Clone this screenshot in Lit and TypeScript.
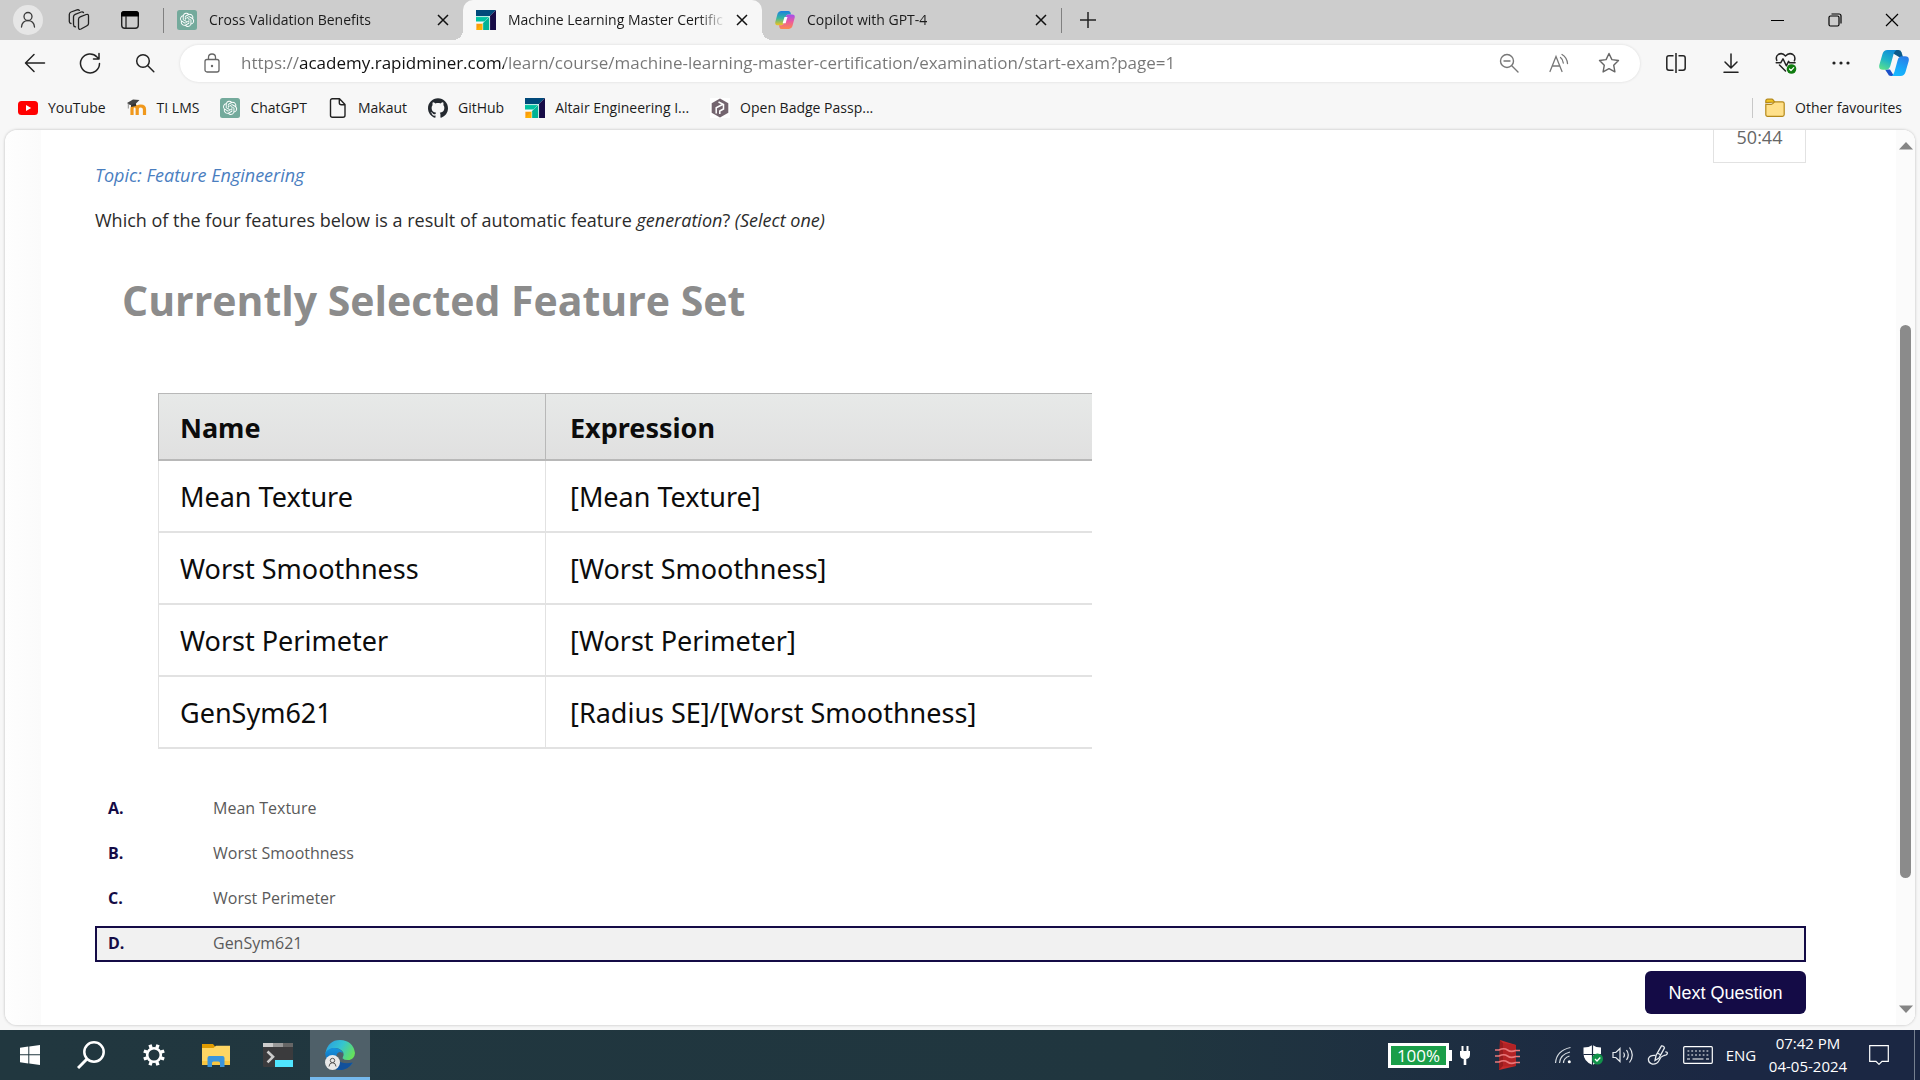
import { LitElement, html, css, TemplateResult } from "lit";
import { customElement, property, state } from "lit/decorators.js";
import { classMap } from "lit/directives/class-map.js";

const icons: Record<string, TemplateResult> = {
  profile: html`<svg width="30" height="30" viewBox="0 0 30 30"><circle cx="15" cy="15" r="15" fill="#e6e6e6"/><g fill="none" stroke="#3a3a3a" stroke-width="1.3" stroke-linecap="round"><circle cx="15" cy="11.5" r="4"/><path d="M8.5 22c.4-4 3-6.3 6.5-6.3s6.100 2.300 6.500 6.300"/></g></svg>`,
  workspaces: html`<svg width="22" height="22" viewBox="0 0 22 22" fill="none" stroke="#222" stroke-width="1.3" stroke-linejoin="round" stroke-linecap="round"><path d="M10.500 10.300q0-1.800 1.700-2.500l6-2.300q2.300-.7 2.300 1.500v7.500q0 1.500-1.500 2.200l-6 3.300q-2.500 1-2.500-1.500z"/><path d="M7.500 17.800q-2-.3-2-2.300V7.800q0-1.800 1.700-2.500l6-2.300q1.500-.5 2.300.5"/><path d="M3 14.500q-1.700-.3-1.700-2V5.500q0-1.800 1.700-2.500l6-2.100q1.500-.5 2.300.5"/></svg>`,
  tabActions: html`<svg width="20" height="20" viewBox="0 0 20 20"><rect x="1.700" y="1.700" width="16.600" height="16.600" rx="3" fill="none" stroke="#222" stroke-width="1.400"/><path d="M1 6.500V4q0-3 3-3h12q3 0 3 3v2.500z" fill="#000"/><path d="M6 6v12" stroke="#222" stroke-width="1.300"/></svg>`,
  chatgpt: html`<svg width="20" height="20" viewBox="0 0 40 40"><rect width="40" height="40" rx="5" fill="#74aa9c"/><path transform="translate(6 5.500) scale(1.180)" fill="#fff" d="M22.2819 9.8211a5.9847 5.9847 0 0 0-.5157-4.9108 6.0462 6.0462 0 0 0-6.5098-2.9A6.0651 6.0651 0 0 0 4.9807 4.1818a5.9847 5.9847 0 0 0-3.9977 2.9 6.0462 6.0462 0 0 0 .7427 7.0966 5.98 5.98 0 0 0 .511 4.9107 6.051 6.051 0 0 0 6.5146 2.9001A5.9847 5.9847 0 0 0 13.2599 24a6.0557 6.0557 0 0 0 5.7718-4.2058 5.9894 5.9894 0 0 0 3.9977-2.9001 6.0557 6.0557 0 0 0-.7475-7.0729zm-9.022 12.6081a4.4755 4.4755 0 0 1-2.8764-1.0408l.1419-.0804 4.7783-2.7582a.7948.7948 0 0 0 .3927-.6813v-6.7369l2.02 1.1686a.071.071 0 0 1 .038.052v5.5826a4.504 4.504 0 0 1-4.4945 4.4944zm-9.6607-4.1254a4.4708 4.4708 0 0 1-.5346-3.0137l.142.0852 4.783 2.7582a.7712.7712 0 0 0 .7806 0l5.8428-3.3685v2.3324a.0804.0804 0 0 1-.0332.0615L9.74 19.9502a4.4992 4.4992 0 0 1-6.1408-1.6464zM2.3408 7.8956a4.485 4.485 0 0 1 2.3655-1.9728V11.6a.7664.7664 0 0 0 .3879.6765l5.8144 3.3543-2.0201 1.1685a.0757.0757 0 0 1-.071 0l-4.8303-2.7865A4.504 4.504 0 0 1 2.3408 7.872zm16.5963 3.8558L13.1038 8.364 15.1192 7.2a.0757.0757 0 0 1 .071 0l4.8303 2.7913a4.4944 4.4944 0 0 1-.6765 8.1042v-5.6772a.79.79 0 0 0-.407-.667zm2.0107-3.0231l-.142-.0852-4.7735-2.7818a.7759.7759 0 0 0-.7854 0L9.409 9.2297V6.8974a.0662.0662 0 0 1 .0284-.0615l4.8303-2.7866a4.4992 4.4992 0 0 1 6.6802 4.66zM8.3065 12.863l-2.02-1.1638a.0804.0804 0 0 1-.038-.0567V6.0742a4.4992 4.4992 0 0 1 7.3757-3.4537l-.142.0805L8.704 5.459a.7948.7948 0 0 0-.3927.6813zm1.0976-2.3654l2.602-1.4998 2.6069 1.4998v2.9994l-2.5974 1.4997-2.6067-1.4997Z"/></svg>`,
  altair: html`<svg width="20" height="20" viewBox="0 0 20 20"><path d="M0 0h20l-6 6H0z" fill="#00497a"/><path d="M20 0v20h-6V6z" fill="#160b46"/><path d="M0 6.600h13.200L8.500 11.500H0z" fill="#00c2a2"/><path d="M13.400 6.800V20H6.600v-6.500z" fill="#00b295"/><path d="M0 7v-.4h13.600V20" fill="none" stroke="#d9f3ee" stroke-width=".7"/><path d="M0 13.300h6.700V20H0z" fill="#fa9c0e" stroke="#fff" stroke-width=".7"/><path d="M0 20h6.400v-6.400z" fill="#ffb000"/></svg>`,
  copilotTab: html`<svg width="20" height="20" viewBox="0 0 20 20"><defs><linearGradient id="ca" x1="0" y1="0" x2="0" y2="1"><stop offset="0" stop-color="#1a7fe0"/><stop offset=".5" stop-color="#35b7a0"/><stop offset="1" stop-color="#f3c21b"/></linearGradient><linearGradient id="cb" x1="0" y1="0" x2="0" y2="1"><stop offset="0" stop-color="#a04df0"/><stop offset=".5" stop-color="#ec5a9c"/><stop offset="1" stop-color="#fb8a4c"/></linearGradient></defs><path d="M6 1h7.500q1.500 0 2 1.500L16 4.500h-3q-1.500 0-2 1.500L8.700 13.500q-.6 1.700-2.300 1.700H3Q-.3 15.200.3 12L2.600 3.600Q3.500 1 6 1z" fill="url(#ca)"/><path d="M14 19H6.500q-1.500 0-2-1.500L4 15.200h2.500q1.700 0 2.300-1.700L11 6q.5-1.600 2.300-1.600H17q3.300 0 2.700 3.200l-2.300 8.600Q16.500 19 14 19z" fill="url(#cb)"/><path d="M9.500 7h3L10.600 13.300h-3z" fill="#fff"/></svg>`,
  close: html`<svg width="12" height="12" viewBox="0 0 12 12" stroke="#111" stroke-width="1.500"><path d="m1 1 10 10M11 1 1 11"/></svg>`,
  plus: html`<svg width="18" height="18" viewBox="0 0 18 18" stroke="#222" stroke-width="1.500"><path d="M9 1v16M1 9h16"/></svg>`,
  minimize: html`<svg width="13" height="13" viewBox="0 0 13 13"><path d="M0 6.500h13" stroke="#000"/></svg>`,
  restore: html`<svg width="14" height="14" viewBox="0 0 14 14" fill="none" stroke="#000" stroke-width="1.200"><rect x="1" y="3" width="10" height="10" rx="1.500"/><path d="M3.500 1H11q2 0 2 2v7.500"/></svg>`,
  winClose: html`<svg width="14" height="14" viewBox="0 0 14 14" stroke="#000" stroke-width="1.200"><path d="m1 1 12 12M13 1 1 13"/></svg>`,
  back: html`<svg width="22" height="20" viewBox="0 0 22 20" fill="none" stroke="#222" stroke-width="1.500" stroke-linecap="round" stroke-linejoin="round"><path d="M20.500 10H2M10 1.500 1.500 10 10 18.500"/></svg>`,
  reload: html`<svg width="22" height="22" viewBox="0 0 22 22" fill="none" stroke="#222" stroke-width="1.500" stroke-linecap="round" stroke-linejoin="round"><path d="M20.500 11.500A9.500 9.500 0 1 1 18 5l1.500 1.500M20 1.500v5.500h-5.500"/></svg>`,
  search: html`<svg width="20" height="20" viewBox="0 0 20 20" fill="none" stroke="#222" stroke-width="1.500" stroke-linecap="round"><circle cx="8" cy="8" r="6.300"/><path d="m12.800 12.800 6 6"/></svg>`,
  lock: html`<svg width="18" height="20" viewBox="0 0 18 20" fill="none" stroke="#666" stroke-width="1.300"><rect x="2" y="6.500" width="14" height="12.500" rx="2"/><path d="M5.500 6.500V4.300Q5.500 1 9 1t3.500 3.300v2.200"/><circle cx="9" cy="13" r="1.200" fill="#666" stroke="none"/></svg>`,
  zoomOut: html`<svg width="20" height="20" viewBox="0 0 20 20" fill="none" stroke="#777" stroke-width="1.400" stroke-linecap="round"><circle cx="8" cy="8" r="6.500"/><path d="m13 13 6 6M5 8h6"/></svg>`,
  readAloud: html`<svg width="20" height="20" viewBox="0 0 20 20" fill="none" stroke="#777" stroke-width="1.300" stroke-linecap="round"><path d="m1 18.500 6-15 6 15M3.200 13h7.600M11.500 4.500q2.500 1.800 2.800 5.500M13 1.500q5 3 5.500 9"/></svg>`,
  star: html`<svg width="22" height="22" viewBox="0 0 22 22" fill="none" stroke="#666" stroke-width="1.400" stroke-linejoin="round"><path d="m11 1.500 2.900 6.100 6.600.9-4.800 4.700 1.200 6.700L11 16.700l-5.900 3.200 1.200-6.700L1.500 8.500l6.600-.9z"/></svg>`,
  split: html`<svg width="22" height="20" viewBox="0 0 22 20" fill="none" stroke="#222" stroke-width="1.500"><path d="M11 0v20M8.500 2.700H4q-2.200 0-2.200 2.200v10.200q0 2.200 2.200 2.200h4.500M13.500 2.700H18q2.200 0 2.200 2.200v10.200q0 2.200-2.200 2.200h-4.500"/></svg>`,
  download: html`<svg width="16" height="20" viewBox="0 0 16 20" fill="none" stroke="#222" stroke-width="1.500" stroke-linecap="round" stroke-linejoin="round"><path d="M8 1v13.500M2 9l6 6 6-6M1 19.200h14"/></svg>`,
  essentials: html`<svg width="22" height="22" viewBox="0 0 22 22" fill="none" stroke="#222" stroke-width="1.500" stroke-linecap="round" stroke-linejoin="round"><path d="M1.800 8.500Q.3 4.500 3.300 2.500 7.300.2 10.500 4q3.500-3.800 7.400-1.500 3 2 1.500 6.300M4.500 13l6 6M1.200 10.800h4.500l2.300-4 3.300 7 2.300-4.500 1 1.500h5.500"/><circle cx="16.500" cy="17" r="4.800" fill="#107c10" stroke="none"/><path d="m14.500 17 1.500 1.500 2.700-2.800" stroke="#fff" stroke-width="1.200"/></svg>`,
  dots: html`<svg width="18" height="4" viewBox="0 0 18 4" fill="#222"><circle cx="2" cy="2" r="1.600"/><circle cx="9" cy="2" r="1.600"/><circle cx="16" cy="2" r="1.600"/></svg>`,
  copilot: html`<svg width="30" height="28" viewBox="0 0 30 28"><defs><linearGradient id="cc" x1=".6" y1="0" x2=".2" y2="1"><stop offset="0" stop-color="#0f8ed8"/><stop offset=".5" stop-color="#1fb5c8"/><stop offset="1" stop-color="#5be08a"/></linearGradient><linearGradient id="cd" x1=".7" y1="0" x2=".3" y2="1"><stop offset="0" stop-color="#2a7de8"/><stop offset=".6" stop-color="#18a8f8"/><stop offset="1" stop-color="#18b8ff"/></linearGradient></defs><path d="M8.500 1h11q2.300 0 3 2.200L24 8h-4z" fill="#0b5a8a"/><path d="M6 20.500h5l4 6.500h-3q-2.500 0-3.300-2.500z" fill="#1b50c8"/><path d="M8.500 1h9Q15.500 2 14.600 5l-3.300 12q-1 3.700-4.500 3.700H4Q-.6 20.700.3 16L3.500 5Q4.700 1 8.500 1z" fill="url(#cc)"/><path d="M21.500 27h-9q2-1 2.900-4l3.300-12q1-3.700 4.500-3.700H26q4.600 0 3.700 4.700L26.500 23q-1.200 4-5 4z" fill="url(#cd)"/></svg>`,
  youtube: html`<svg width="20" height="20" viewBox="0 0 20 20"><rect y="3" width="20" height="14" rx="3.500" fill="#f00"/><path d="m8 7 5.200 3L8 13z" fill="#fff"/></svg>`,
  moodle: html`<svg width="20" height="20" viewBox="0 0 20 20"><path d="M5 17V11q0-3 2.600-3t2.600 3V17m0-6q0-3 3.500-3 3.800 0 3.800 3.500V17" fill="none" stroke="#f0981c" stroke-width="3.200"/><path d="M0 5 6 1.500 12.500 2 8 6.500 3 7z" fill="#444"/><path d="M1.300 5.500v5" stroke="#777" stroke-width=".8"/><path d="M4 6.500 9 5.200V8L4 9z" fill="#333"/></svg>`,
  file: html`<svg width="20" height="20" viewBox="0 0 20 20" fill="none" stroke="#222" stroke-width="1.400" stroke-linejoin="round"><path d="M4 .8h7.500L17 6.500v10.700q0 2-2 2H4.500q-2 0-2-2V2.800q0-2 2-2zM11.300 1v3.800q0 2 2 2H17"/></svg>`,
  github: html`<svg width="20" height="20" viewBox="0 0 24 24" fill="#24292f"><path d="M12 .297c-6.63 0-12 5.373-12 12 0 5.303 3.438 9.8 8.205 11.385.6.113.82-.258.82-.577 0-.285-.01-1.04-.015-2.04-3.338.724-4.042-1.61-4.042-1.61C4.422 18.07 3.633 17.7 3.633 17.7c-1.087-.744.084-.729.084-.729 1.205.084 1.838 1.236 1.838 1.236 1.07 1.835 2.809 1.305 3.495.998.108-.776.417-1.305.76-1.605-2.665-.3-5.466-1.332-5.466-5.93 0-1.31.465-2.38 1.235-3.22-.135-.303-.54-1.523.105-3.176 0 0 1.005-.322 3.3 1.23.96-.267 1.98-.399 3-.405 1.02.006 2.04.138 3 .405 2.28-1.552 3.285-1.23 3.285-1.23.645 1.653.24 2.873.12 3.176.765.84 1.23 1.91 1.23 3.22 0 4.61-2.805 5.625-5.475 5.92.42.36.81 1.096.81 2.22 0 1.606-.015 2.896-.015 3.286 0 .315.21.69.825.57C20.565 22.092 24 17.592 24 12.297c0-6.627-5.373-12-12-12"/></svg>`,
  badge: html`<svg width="20" height="20" viewBox="0 0 20 20"><rect width="20" height="20" fill="#fff"/><path d="m10 .5 8.300 4.700v9.600L10 19.500l-8.300-4.700V5.200z" fill="#74656f"/><path d="M6.200 15.500V9.800L12.500 6.500M8.500 4l5 2.500v4.500L9.800 13v3" fill="none" stroke="#fff" stroke-width="1.500"/></svg>`,
  folder: html`<svg width="20" height="20" viewBox="0 0 20 20" stroke="#b5891a" stroke-width="1.200"><path d="M.8 4.500V3q0-1.800 1.800-1.800h4.200q.8 0 1.300.6L9.700 4z" fill="#f2c520"/><path d="M.8 6.300h5.500q.8 0 1.400-.6L9 4.300q.5-.5 1.200-.5h7.200q1.800 0 1.800 1.800v11q0 1.800-1.800 1.800H2.600Q.8 18.400.8 16.600z" fill="#ffe08a"/></svg>`,
  windows: html`<svg width="20" height="20" viewBox="0 0 20 20" fill="#fff"><path d="M0 2.800 8.300 1.600v7.700H0zM9.300 1.500 20 0v9.300H9.300zM0 10.300h8.300V18.400L0 17.200zM9.300 10.300H20V20L9.300 18.500z"/></svg>`,
  taskSearch: html`<svg width="30" height="28" viewBox="0 0 30 28" fill="none" stroke="#fff"><circle cx="17" cy="11" r="9.700" stroke-width="2.500"/><path d="M10 18 1 27" stroke-width="3"/></svg>`,
  gear: html`<svg width="24" height="24" viewBox="0 0 24 24" fill="none" stroke="#fff"><circle cx="12" cy="12" r="6.800" stroke-width="2.600"/><path stroke-width="3.400" d="M9.200 5.200 8 1.800M14.800 5.200 16 1.800M18.800 9.200 22.200 8M18.800 14.800 22.200 16M14.800 18.800 16 22.200M9.200 18.800 8 22.200M5.200 14.800 1.800 16M5.200 9.200 1.800 8"/></svg>`,
  explorer: html`<svg width="28" height="24" viewBox="0 0 28 24"><path d="M0 1h11l2.500 3H28v4H0z" fill="#e09b00"/><path d="M0 5h11.500L14 2.700h14V22H0z" fill="#ffd663"/><path d="M0 18h28v4H0z" fill="#f9c640"/><path d="M5.500 24V15q0-2 2-2h13q2 0 2 2v9H18v-4q0-1.500-1.500-1.500h-5Q10 18.500 10 20v4z" fill="#3b95dc"/></svg>`,
  terminal: html`<svg width="30" height="24" viewBox="0 0 30 24"><rect width="30" height="24" rx="1" fill="#3b3b3d"/><path d="M0 0h10v4H0z" fill="#ccc"/><path d="M10 0h10v4H10z" fill="#999"/><path d="M20 0h10v4H20z" fill="#666"/><path d="m4.500 8.500 5.500 5.300-5.500 5.500" fill="none" stroke="#ccc" stroke-width="2.600"/><rect x="12" y="17" width="18" height="7" fill="#50e6ff"/></svg>`,
  edge: html`<svg width="30" height="30" viewBox="0 0 30 30"><defs><linearGradient id="ea" x1="0" y1=".2" x2="1" y2=".6"><stop offset="0" stop-color="#2a9fe0"/><stop offset=".5" stop-color="#35c4d0"/><stop offset="1" stop-color="#66e05a"/></linearGradient><linearGradient id="eb" x1="0" y1="0" x2="0" y2="1"><stop offset="0" stop-color="#1494df"/><stop offset="1" stop-color="#0b56a8"/></linearGradient></defs><path d="M.3 13.500Q3 0 15 0q13 .5 15 13-.5 5.500-5.500 7-5 .5-7-1.800 2-2.700.8-5.700Q16 8.500 10.500 8 4 8 .3 13.500z" fill="url(#ea)"/><path d="M.2 13.500Q3 7.500 10 8q6.500.7 8 5.500-3.500-3-6 .3-2 4 2.500 8 5.500 4.200 13.500 1Q23 29.500 15.500 30 2 29.500.2 13.500z" fill="url(#eb)"/><path d="M12 20q6.500 5 15.500 2.500Q23 29.500 16 30q-3.500-3-4-10z" fill="#12519c"/><circle cx="7.500" cy="22.500" r="7.500" fill="#e8e8e8"/><g fill="none" stroke="#555"><circle cx="7.500" cy="20.500" r="2.200"/><path d="M4 26.500q.3-3.800 3.500-3.800t3.500 3.800"/></g></svg>`,
  plug: html`<svg width="10" height="19" viewBox="0 0 10 19" fill="#fff"><path d="M1.500 0h2v6h-2zM6.500 0h2v6h-2zM0 5h10v3.500q0 4-3.700 4.500v6H3.700v-6Q0 12.500 0 8.500z"/></svg>`,
  redStack: html`<svg width="26" height="30" viewBox="0 0 26 30"><path d="M5 0 21 5v21L4 30z" fill="#c62b2b"/><path d="M5 0 8 3v23l-4 4z" fill="#971c1e"/><path d="m8 3 13 2v21L8 26.500z" fill="#b32325"/><g fill="none" stroke="#e8787a" stroke-width="1.600"><path d="M0 10h4q5-2.500 8.500 0t8 .5H25M0 16h4q5-2.500 8.500 0t8 .5H25M0 22h4q5-2.500 8.500 0t8 .5H25"/></g></svg>`,
  wifi: html`<svg width="18" height="18" viewBox="0 0 18 18" fill="none" stroke="#d4dae0" stroke-width="1.200"><circle cx="15.300" cy="15.700" r="1.500" fill="#fff" stroke="none"/><path d="M9.500 17q0-5 6-7M5.500 17q.5-8.500 10.500-11M1.500 17Q2.500 4.500 16.500 1.500"/></svg>`,
  shield: html`<svg width="20" height="20" viewBox="0 0 20 20"><path d="M9.500 0Q13 2.500 18 2.500v6q0 8-8.500 11.500Q.5 16.500.5 8.500v-6Q6 2.500 9.500 0z" fill="#fff"/><path d="M9.500 0v20M.5 9.500H18" stroke="#1d2b42" stroke-width="1.200"/><circle cx="14.500" cy="14" r="5.500" fill="#12924a"/><path d="m12 14 2 2 3.300-3.500" fill="none" stroke="#fff" stroke-width="1.300"/></svg>`,
  speaker: html`<svg width="22" height="18" viewBox="0 0 22 18" fill="none" stroke="#e6eaee" stroke-width="1.200"><path d="M1 6.500h2.800L8 2.500v13l-4.200-4H1zM11.500 6.500q1.800 2.500 0 5M14.500 4q3.500 5 0 10M17.500 1.500q5.500 7.500 0 15"/></svg>`,
  pen: html`<svg width="22" height="20" viewBox="0 0 22 20" fill="none" stroke="#e6eaee" stroke-width="1.300"><path d="m8 15.500 1-5L14.500.9q2.500-.4 3 2L12 13zM10.500 8l3.300 2"/><path d="M8.500 10.500Q3 10 1.500 13.500q-.5 4 3.500 5.500 5 .5 7-3.500 1.500-4 5-5 3-.2 3.300-2t-2-1.500"/></svg>`,
  keyboard: html`<svg width="30" height="18" viewBox="0 0 30 18" fill="none" stroke="#fff" stroke-width="1.200"><rect x=".7" y=".7" width="28.600" height="16.600" rx="1"/><path d="M4.500 5h21M4.500 9h21" stroke-dasharray="1.800 2"/><path d="M4 13h3M9.500 13h11M23 13h3"/></svg>`,
  notice: html`<svg width="20" height="20" viewBox="0 0 20 20" fill="none" stroke="#fff" stroke-width="1.200"><path d="M.7.700h18.600v15.600H13l-3 3-3-3H.7z"/></svg>`,
  up: html`<svg width="14" height="8" viewBox="0 0 14 8"><path d="m7 0 7 7.500H0z" fill="#858585"/></svg>`,
  down: html`<svg width="14" height="8" viewBox="0 0 14 8"><path d="m7 8 7-7.500H0z" fill="#858585"/></svg>`,
};

const shared = css`
  :host { box-sizing: border-box; font-family: "Open Sans", "Noto Sans", sans-serif; }
  *, *::before, *::after { box-sizing: border-box; }
  svg { display: block; flex: none; }
  button { border: 0; padding: 0; margin: 0; background: none; font: inherit; color: inherit; display: flex; align-items: center; justify-content: center; flex: none; }
  a { color: inherit; text-decoration: none; }
`;

@customElement("browser-tabs")
class BrowserTabs extends LitElement {
  static styles = [shared, css`
    :host { display: flex; height: 40px; background: #cdcdcd; font-size: 14px; color: #1b1b1b; }
    .tools { display: flex; align-items: center; width: 164px; padding-left: 2px; flex: none; }
    .tools button { width: 51px; height: 40px; }
    .rule { width: 1px; height: 25px; background: #808080; margin-left: auto; flex: none; }
    .tab { display: flex; align-items: center; width: 299px; min-width: 0; padding: 0 4px 0 13px; position: relative; }
    .tab.active { background: #f7f7f7; border-radius: 10px 10px 0 0; }
    .tab.active::before, .tab.active::after { content: ""; position: absolute; bottom: 0; width: 10px; height: 10px; }
    .tab.active::before { left: -10px; background: radial-gradient(circle at 0 0, #cdcdcd 10px, #f7f7f7 10px); }
    .tab.active::after { right: -10px; background: radial-gradient(circle at 100% 0, #cdcdcd 10px, #f7f7f7 10px); }
    .label { flex: 1; min-width: 0; margin-left: 12px; padding-bottom: 2px; overflow: hidden; white-space: nowrap; mask-image: linear-gradient(to right, #000 calc(100% - 28px), transparent); }
    .shut { width: 32px; height: 32px; }
    .new { width: 52px; height: 40px; }
    .end { align-self: center; margin-left: 0; }
    .window { display: flex; margin-left: auto; }
    .window button { width: 57px; height: 40px; }
  `];
  @property({ type: Array }) tabs: { icon: string; label: string; active?: boolean }[] = [];
  render() {
    return html`
      <div class="tools">
        <button aria-label="Profile">${icons.profile}</button>
        <button aria-label="Workspaces">${icons.workspaces}</button>
        <button aria-label="Tab actions menu">${icons.tabActions}</button>
        <span class="rule"></span>
      </div>
      ${this.tabs.map((t) => html`
        <div class=${classMap({ tab: true, active: !!t.active })}>
          ${icons[t.icon]}<span class="label">${t.label}</span>
          <button class="shut" aria-label="Close tab">${icons.close}</button>
        </div>`)}
      <span class="rule end"></span>
      <button class="new" aria-label="New tab">${icons.plus}</button>
      <div class="window">
        <button aria-label="Minimise">${icons.minimize}</button>
        <button aria-label="Restore">${icons.restore}</button>
        <button aria-label="Close window">${icons.winClose}</button>
      </div>`;
  }
}

@customElement("browser-toolbar")
class BrowserToolbar extends LitElement {
  static styles = [shared, css`
    :host { display: flex; align-items: center; height: 46px; gap: 8px; padding: 0 0 0 7px; background: #f7f7f7; }
    .group { display: flex; }
    .group button { width: 55px; height: 36px; }
    .group .brand { width: 52px; }
    .address { flex: 1; min-width: 0; display: flex; align-items: center; height: 37px; border-radius: 19px; background: #fff; padding: 0 6px 0 7px; box-shadow: 0 0 3px #0000001f; }
    .address button { width: 50px; height: 36px; }
    .url { flex: 1; min-width: 0; border: 0; outline: 0; padding: 0 0 0 4px; font: 17px/36px "Open Sans", sans-serif; color: transparent; background: linear-gradient(to right, #767676 62px, #111 62px 267px, #767676 267px); -webkit-background-clip: text; background-clip: text; }
  `];
  @property() url = "";
  render() {
    return html`
      <div class="group">
        <button aria-label="Back">${icons.back}</button>
        <button aria-label="Refresh">${icons.reload}</button>
        <button aria-label="Search">${icons.search}</button>
      </div>
      <div class="address">
        <button aria-label="Site information">${icons.lock}</button>
        <input class="url" type="text" aria-label="Address" .value=${this.url}>
        <button aria-label="Zoom">${icons.zoomOut}</button>
        <button aria-label="Read aloud">${icons.readAloud}</button>
        <button aria-label="Add to favourites">${icons.star}</button>
      </div>
      <div class="group">
        <button aria-label="Split screen">${icons.split}</button>
        <button aria-label="Downloads">${icons.download}</button>
        <button aria-label="Browser essentials">${icons.essentials}</button>
        <button aria-label="Settings and more">${icons.dots}</button>
        <button class="brand" aria-label="Copilot">${icons.copilot}</button>
      </div>`;
  }
}

@customElement("favourites-bar")
class FavouritesBar extends LitElement {
  static styles = [shared, css`
    :host { display: flex; align-items: center; height: 44px; padding: 0 18px; gap: 21px; background: #f7f7f7; font-size: 14px; color: #1b1b1b; white-space: nowrap; }
    a, .others { display: flex; align-items: center; gap: 10px; }
    .name { padding-bottom: 2px; }
    .side { display: flex; align-items: center; gap: 12px; margin-left: auto; }
    .rule { width: 1px; height: 20px; background: #c8c8c8; }
  `];
  @property({ type: Array }) items: { icon: string; label: string }[] = [];
  render() {
    return html`
      ${this.items.map((i) => html`<a href="#">${icons[i.icon]}<span class="name">${i.label}</span></a>`)}
      <div class="side"><span class="rule"></span><button class="others">${icons.folder}<span class="name">Other favourites</span></button></div>`;
  }
}

@customElement("exam-question")
class ExamQuestion extends LitElement {
  static styles = [shared, css`
    :host { display: block; padding: 0 90px 11px; color: #2b2b2b; font-size: 18px; line-height: 24px; }
    .timer { width: 93px; height: 33px; margin-left: auto; border: 1px solid #e2e2e2; border-top: 0; text-align: center; line-height: 14px; color: #666; }
    .topic { margin: 0; font-style: italic; color: #4a7ebf; }
    .question { margin: 21px 0 0; }
    .figure { margin: 40px 0 0; max-width: 997px; }
    .title { margin: 0 0 0 27px; font-size: 41px; line-height: 56px; font-weight: 700; color: #8c8c8c; }
    .features { width: calc(100% - 63px); margin: 65px 0 0 63px; border-collapse: separate; border-spacing: 0; table-layout: fixed; font: 27px/36px "Noto Sans", sans-serif; color: #0c0c0c; }
    .features th, .features td { text-align: left; padding: 2px 0 0 24px; font-weight: 400; border-left: 1px solid #e2e2e2; border-bottom: 2px solid #e2e2e2; height: 72px; }
    .features .name { width: 387px; padding-left: 21px; }
    .features thead th { height: 68px; font-weight: 700; background: linear-gradient(#e7e9e8, #e0e0e0); border-color: #b8b8b8; border-top: 1px solid #b8b8b8; }
    .answers { display: grid; gap: 9px; margin: 42px 0 0; padding: 0; border: 0; min-width: 0; }
    .answer { display: flex; align-items: center; height: 36px; padding: 0 11px 2px; border: 2px solid transparent; font-size: 16px; }
    .answer.picked { background: #f1f1f1; border-color: #140b46; }
    .pick { appearance: none; width: 0; height: 0; margin: 0; outline: 0; }
    .letter { width: 105px; font-weight: 700; color: #140b46; }
    .text { color: #5a5a5a; }
    .next { width: 161px; height: 43px; margin: 9px 0 0 auto; border-radius: 6px; background: #140b46; color: #fff; font: 18px/22px "Liberation Sans", sans-serif; }
  `];
  @property({ type: Array }) features: [string, string][] = [];
  @state() picked = "D";
  render() {
    return html`
      <div class="timer" role="timer">50:44</div>
      <p class="topic">Topic: Feature Engineering</p>
      <p class="question" id="q">Which of the four features below is a result of automatic feature <em>generation</em>? <em>(Select one)</em></p>
      <div class="figure">
        <h2 class="title">Currently Selected Feature Set</h2>
        <table class="features">
          <thead><tr><th class="name" scope="col">Name</th><th scope="col">Expression</th></tr></thead>
          <tbody>${this.features.map(([n, e]) => html`<tr><td class="name">${n}</td><td>${e}</td></tr>`)}</tbody>
        </table>
      </div>
      <fieldset class="answers" aria-labelledby="q">
        ${this.features.map(([n], i) => {
          const letter = "ABCD"[i];
          return html`<label class=${classMap({ answer: true, picked: letter === this.picked })}>
            <input class="pick" type="radio" name="answer" .checked=${letter === this.picked} @change=${() => (this.picked = letter)}>
            <span class="letter">${letter}.</span><span class="text">${n}</span></label>`;
        })}
      </fieldset>
      <button class="next">Next Question</button>`;
  }
}

@customElement("task-bar")
class TaskBar extends LitElement {
  static styles = [shared, css`
    :host { display: flex; height: 50px; background: linear-gradient(to right, #21373f, #20363f 60%, #1b2743 90%); color: #fff; font-size: 15px; }
    .apps { display: flex; gap: 2px; }
    .apps button { width: 60px; height: 50px; }
    .apps .open { background: #4f6069; border-bottom: 3px solid #76b9ed; padding-top: 3px; }
    .tray { display: flex; align-items: center; margin-left: auto; padding-right: 5px; }
    .tray button { height: 50px; width: 30px; }
    .tray .wide { width: 40px; }
    .tray .stack { width: 50px; margin: 0 15px 0 13px; }
    .tray .lang { width: 46px; }
    .tray .clock { width: 88px; display: grid; justify-items: center; align-content: center; line-height: 23px; }
    .tray .note { width: 54px; margin-right: 8px; }
    .level { display: flex; align-items: center; justify-content: center; width: 61px; height: 25px; border: 3px solid #fff; background: #1a9e49; font-size: 17px; line-height: 19px; }
    .cap { width: 3px; height: 11px; background: #fff; margin-right: 8px; }
    .edge { width: 1px; height: 50px; background: #75808f; }
  `];
  render() {
    return html`
      <div class="apps">
        <button aria-label="Start">${icons.windows}</button>
        <button aria-label="Search">${icons.taskSearch}</button>
        <button aria-label="Settings">${icons.gear}</button>
        <button aria-label="File Explorer">${icons.explorer}</button>
        <button aria-label="Terminal">${icons.terminal}</button>
        <button class="open" aria-label="Edge">${icons.edge}</button>
      </div>
      <div class="tray">
        <span class="level">100%</span><span class="cap"></span>${icons.plug}
        <button class="stack" aria-label="Sync">${icons.redStack}</button>
        <button aria-label="Network">${icons.wifi}</button>
        <button aria-label="Security">${icons.shield}</button>
        <button aria-label="Volume">${icons.speaker}</button>
        <button class="wide" aria-label="Pen">${icons.pen}</button>
        <button class="wide" aria-label="Keyboard">${icons.keyboard}</button>
        <button class="lang">ENG</button>
        <button class="clock"><span>07:42 PM</span><span>04-05-2024</span></button>
        <button class="note" aria-label="Notifications">${icons.notice}</button>
        <span class="edge"></span>
      </div>`;
  }
}

@customElement("app-root")
class AppRoot extends LitElement {
  static styles = [shared, css`
    :host { display: flex; flex-direction: column; min-height: 100vh; background: #f7f7f7; }
    .page { flex: 1; display: flex; margin: 0 5px 5px; border-radius: 12px; overflow: hidden; background: linear-gradient(to right, #fefefe, #fbfbfb 36px, #fff 36px); box-shadow: 0 0 3px #00000040; }
    .main { flex: 1; min-width: 0; }
    .scroll { display: flex; flex-direction: column; align-items: center; width: 19px; padding: 12px 0; background: #fbfbfb; flex: none; }
    .track { flex: 1; display: flex; flex-direction: column; padding: 175px 0 127px; }
    .thumb { flex: 1; width: 11px; border-radius: 6px; background: #8b8b8b; }
  `];
  private tabs = [
    { icon: "chatgpt", label: "Cross Validation Benefits" },
    { icon: "altair", label: "Machine Learning Master Certific", active: true },
    { icon: "copilotTab", label: "Copilot with GPT-4" },
  ];
  private favourites = [
    { icon: "youtube", label: "YouTube" },
    { icon: "moodle", label: "TI LMS" },
    { icon: "chatgpt", label: "ChatGPT" },
    { icon: "file", label: "Makaut" },
    { icon: "github", label: "GitHub" },
    { icon: "altair", label: "Altair Engineering I..." },
    { icon: "badge", label: "Open Badge Passp..." },
  ];
  private features = [
    ["Mean Texture", "[Mean Texture]"],
    ["Worst Smoothness", "[Worst Smoothness]"],
    ["Worst Perimeter", "[Worst Perimeter]"],
    ["GenSym621", "[Radius SE]/[Worst Smoothness]"],
  ];
  render() {
    return html`
      <browser-tabs .tabs=${this.tabs}></browser-tabs>
      <browser-toolbar .url=${"https://academy.rapidminer.com/learn/course/machine-learning-master-certification/examination/start-exam?page=1"}></browser-toolbar>
      <favourites-bar .items=${this.favourites}></favourites-bar>
      <div class="page">
        <exam-question class="main" .features=${this.features}></exam-question>
        <div class="scroll" aria-hidden="true">${icons.up}<div class="track"><div class="thumb"></div></div>${icons.down}</div>
      </div>
      <task-bar></task-bar>`;
  }
}
